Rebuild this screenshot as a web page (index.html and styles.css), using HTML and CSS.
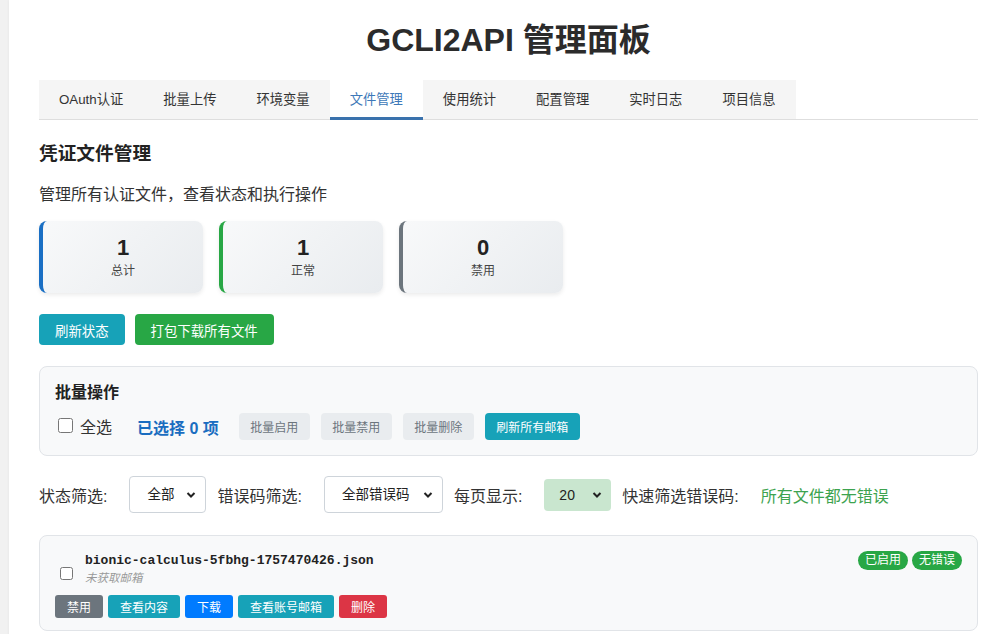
FILE: index.html
```html
<!DOCTYPE html>
<html lang="zh-CN">
<head>
<meta charset="utf-8">
<title>GCLI2API 管理面板</title>
<link rel="stylesheet" href="styles.css">
</head>
<body>
<div class="page">
  <h1 class="title">GCLI2API 管理面板</h1>
  <div class="tabbar">
    <div class="tabs">
      <div class="tab">OAuth认证</div>
      <div class="tab">批量上传</div>
      <div class="tab">环境变量</div>
      <div class="tab active">文件管理</div>
      <div class="tab">使用统计</div>
      <div class="tab">配置管理</div>
      <div class="tab">实时日志</div>
      <div class="tab">项目信息</div>
    </div>
  </div>

  <h2 class="section-title">凭证文件管理</h2>
  <p class="desc">管理所有认证文件，查看状态和执行操作</p>

  <div class="stats">
    <div class="stat stat-total"><div class="stat-num">1</div><div class="stat-label">总计</div></div>
    <div class="stat stat-ok"><div class="stat-num">1</div><div class="stat-label">正常</div></div>
    <div class="stat stat-off"><div class="stat-num">0</div><div class="stat-label">禁用</div></div>
  </div>

  <div class="actions">
    <button class="btn btn-info">刷新状态</button>
    <button class="btn btn-success">打包下载所有文件</button>
  </div>

  <div class="batch">
    <div class="batch-title">批量操作</div>
    <div class="batch-row">
      <label class="select-all"><input type="checkbox" class="cb-lg"> 全选</label>
      <span class="selected-count">已选择 0 项</span>
      <button class="btn-sm btn-disabled">批量启用</button>
      <button class="btn-sm btn-disabled">批量禁用</button>
      <button class="btn-sm btn-disabled">批量删除</button>
      <button class="btn-sm btn-info">刷新所有邮箱</button>
    </div>
  </div>

  <div class="filters">
    <span class="flabel">状态筛选:</span>
    <select class="fselect fs-status"><option>全部</option></select>
    <span class="flabel">错误码筛选:</span>
    <select class="fselect fs-error"><option>全部错误码</option></select>
    <span class="flabel">每页显示:</span>
    <select class="fselect fs-page"><option>20</option></select>
    <span class="flabel">快速筛选错误码:</span>
    <span class="no-error">所有文件都无错误</span>
  </div>

  <div class="file-card">
    <div class="file-top">
      <div class="file-main">
        <input type="checkbox" class="cb-sm">
        <div class="file-info">
          <div class="file-name">bionic-calculus-5fbhg-1757470426.json</div>
          <div class="file-email">未获取邮箱</div>
        </div>
      </div>
      <div class="badges">
        <span class="badge">已启用</span>
        <span class="badge">无错误</span>
      </div>
    </div>
    <div class="file-actions">
      <button class="btn-xs bg-gray">禁用</button>
      <button class="btn-xs bg-info">查看内容</button>
      <button class="btn-xs bg-blue">下载</button>
      <button class="btn-xs bg-info">查看账号邮箱</button>
      <button class="btn-xs bg-red">删除</button>
    </div>
  </div>
</div>
</body>
</html>
```

FILE: styles.css
```css
* { box-sizing: border-box; }
html, body { margin: 0; padding: 0; }
body {
  background: #f1f1f1;
  font-family: "Liberation Sans", "Noto Sans CJK SC", sans-serif;
  color: #333;
  overflow: hidden;
}
.page {
  margin-left: 9px;
  width: 999px;
  background: #fff;
  padding: 20px 30px 30px 30px;
  min-height: 634px;
  box-shadow: 0 0 3px rgba(0,0,0,0.06);
}
.title {
  margin: 0 0 20px 0;
  font-size: 32px;
  line-height: 40px;
  font-weight: bold;
  text-align: center;
  color: #2b2b2b;
}
.tabbar {
  border-bottom: 1px solid #dedede;
  display: flex;
}
.tabs {
  display: flex;
  background: #f5f5f5;
}
.tab {
  height: 39px;
  line-height: 39px;
  padding: 0 20px;
  font-size: 13.3px;
  color: #333;
  text-align: center;
  white-space: nowrap;
  margin-bottom: -1px;
}
.tab.active {
  background: #fff;
  color: #3d78b8;
  border-bottom: 3px solid #3a72ad;
  height: 40px;
  line-height: 39px;
}
.section-title {
  margin: 20px 0 16px 0;
  font-size: 18.7px;
  line-height: 28px;
  font-weight: bold;
  color: #222;
}
.desc {
  margin: 0 0 15px 0;
  font-size: 16px;
  line-height: 22px;
  color: #333;
}
.stats {
  display: flex;
  gap: 16px;
}
.stat {
  width: 164px;
  height: 72px;
  border-radius: 8px;
  background: linear-gradient(135deg, #f8f9fa 0%, #e9ecef 100%);
  box-shadow: 0 2px 4px rgba(0,0,0,0.08);
  border-left: 4px solid #1a6fc4;
  display: flex;
  flex-direction: column;
  align-items: center;
  justify-content: center;
}
.stat-ok { border-left-color: #28a745; }
.stat-off { border-left-color: #6c757d; }
.stat-num {
  font-size: 22px;
  font-weight: bold;
  line-height: 26px;
  color: #222;
}
.stat-label {
  font-size: 12px;
  line-height: 16px;
  color: #444;
  margin-top: 2px;
}
.actions {
  display: flex;
  gap: 10px;
  margin-top: 21px;
}
.btn {
  border: none;
  border-radius: 4px;
  color: #fff;
  font-family: inherit;
  font-size: 13.4px;
  height: 31px;
  padding: 0 16px;
  cursor: pointer;
}
.btn-info { background: #17a2b8; color: #fff; }
.btn-success { background: #28a745; }
.batch {
  margin-top: 21px;
  background: #f8f9fa;
  border: 1px solid #e1e4e8;
  border-radius: 8px;
  padding: 14px 15px 15px 15px;
}
.batch-title {
  font-size: 16px;
  font-weight: bold;
  line-height: 24px;
  color: #222;
}
.batch-row {
  margin-top: 8px;
  display: flex;
  align-items: center;
}
.select-all {
  display: flex;
  align-items: center;
  font-size: 16px;
  color: #333;
  margin-left: 3px;
  margin-bottom: 2px;
}
.cb-lg {
  width: 15px;
  height: 15px;
  margin: 0 7px 0 0;
}
.selected-count {
  color: #1a6dc0;
  font-weight: bold;
  font-size: 16px;
  margin-left: 25px;
  margin-right: 20px;
}
.btn-sm {
  border: none;
  border-radius: 4px;
  font-family: inherit;
  font-size: 12px;
  height: 27px;
  padding: 0 11.5px;
  margin-right: 11px;
}
.btn-disabled { background: #e9ecef; color: #6c757d; }
.filters {
  margin-top: 20px;
  display: flex;
  align-items: center;
}
.flabel {
  font-size: 16px;
  color: #333;
  margin-right: 22px;
}
.fselect {
  appearance: none;
  -webkit-appearance: none;
  font-family: inherit;
  font-size: 13.5px;
  color: #222;
  height: 37px;
  border: 1px solid #ced4da;
  border-radius: 4px;
  background-color: #fff;
  background-image: url("data:image/svg+xml;utf8,<svg xmlns='http://www.w3.org/2000/svg' width='10' height='8' viewBox='0 0 10 8'><path d='M1.5 2 L5 5.5 L8.5 2' fill='none' stroke='%23222' stroke-width='2'/></svg>");
  background-repeat: no-repeat;
  background-position: right 9px center;
  padding: 0 0 0 17px;
  margin-right: 11px;
}
.fs-status { width: 77px; }
.fs-error { width: 119px; }
.fs-page {
  width: 67px;
  border: none;
  background-color: #c9e6cf;
  height: 32px;
  padding-left: 15px;
  font-size: 14px;
}
.no-error {
  color: #3da34f;
  font-size: 16px;
}
.file-card {
  margin-top: 22px;
  background: #f8f9fa;
  border: 1px solid #e1e4e8;
  border-radius: 8px;
  padding: 15px 15px 12px 15px;
}
.file-top {
  display: flex;
  justify-content: space-between;
  align-items: flex-start;
}
.file-main {
  display: flex;
  align-items: center;
}
.cb-sm {
  width: 13px;
  height: 13px;
  margin: 8px 12px 0 5px;
}
.file-info { padding-top: 1px; }
.file-name {
  font-family: "Liberation Mono", monospace;
  font-weight: bold;
  font-size: 13px;
  line-height: 17px;
  color: #222;
}
.file-email {
  font-size: 11.5px;
  font-style: italic;
  color: #999;
  line-height: 18px;
}
.badges {
  display: flex;
  gap: 4px;
}
.badge {
  background: #28a745;
  color: #fff;
  font-size: 12px;
  line-height: 19px;
  height: 19px;
  padding: 0 7px;
  border-radius: 10px;
}
.file-actions {
  margin-top: 8px;
  display: flex;
  gap: 5px;
}
.btn-xs {
  border: none;
  border-radius: 3px;
  color: #fff;
  font-family: inherit;
  font-size: 12px;
  height: 23px;
  padding: 0 12px;
}
.bg-gray { background: #6c757d; }
.bg-info { background: #17a2b8; }
.bg-blue { background: #007bff; }
.bg-red { background: #dc3545; }
```
